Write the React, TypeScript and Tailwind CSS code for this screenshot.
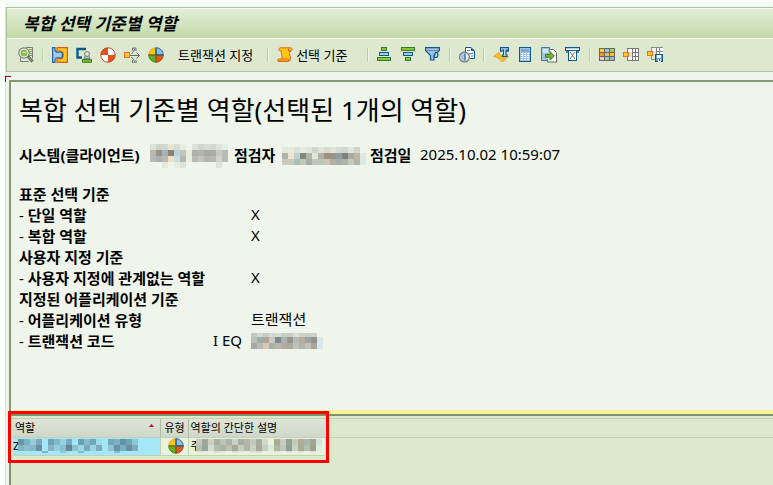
import type { ReactNode } from 'react'

const FONT = "font-['Noto_Sans','Noto_Sans_CJK_KR',sans-serif]"

/* ---------- Toolbar icons (16x16) ---------- */

function Icon({ children, crisp = true }: { children: ReactNode; crisp?: boolean }) {
  return (
    <svg
      className="w-4 h-4 block shrink-0"
      viewBox="0 0 16 16"
      fill="none"
      shapeRendering={crisp ? 'crispEdges' : 'auto'}
      aria-hidden="true"
    >
      {children}
    </svg>
  )
}

const SearchDocIcon = () => (
  <Icon crisp={false}>
    <path d="M8 .5h6.500v11M2.500 10.500v4h8" stroke="#7b7b7b" />
    <path d="M9 1h5v10h-4z" fill="#e4f4c8" />
    <path d="M11 2.500h3M11 4.500h3M11 6.500h3M11 8.500h3" stroke="#6fa82f" />
    <circle cx="6" cy="6" r="5.200" fill="#f4f8ee" stroke="#808080" strokeWidth="1.200" />
    <circle cx="6" cy="6" r="3.500" fill="#8cc152" />
    <path d="M4.500 5.500h4" stroke="#cfe8a8" />
    <path d="M10 9.500l4.500 5" stroke="#666" strokeWidth="3" />
    <path d="M10.500 10l3 3.500" stroke="#a8a8a8" />
  </Icon>
)

const RoleInIcon = () => (
  <Icon crisp={false}>
    <path d="M5 .600h10.400v14.800H5V12h2.500c5 0 5-8 0-8H5z" fill="#ffc61a" stroke="#e0581e" strokeWidth="1.200" />
    <path
      d="M.600.600h2.400v3c1.500 2 3 2 4.500 1.400 4-1 4 7 0 6-1.500-.6-3-.6-4.500 1.400v3H.600z"
      fill="#a4c8e6"
      stroke="#1c679b"
      strokeWidth="1.200"
    />
  </Icon>
)

const UserScreenIcon = () => (
  <Icon crisp={false}>
    <path d="M10 2H1.500v8.500H6" stroke="#0b5a8c" strokeWidth="2.400" />
    <path d="M6.500 15.300v-3h9v3z" fill="#7db72f" stroke="#2f7d1e" />
    <path d="M8.500 11.500V9.800h5v1.700z" fill="#eee" stroke="#777" />
    <circle cx="11" cy="7" r="2.400" fill="#e6e6e6" stroke="#777" />
  </Icon>
)

const SingleRoleIcon = () => (
  <Icon crisp={false}>
    <circle cx="8" cy="8" r="7.300" fill="#fff" />
    <path d="M8 8V.7A7.300 7.300 0 0 0 .7 8zM8 8v7.300A7.300 7.300 0 0 0 15.300 8z" fill="#d9541e" />
    <circle cx="8" cy="8" r="7.200" stroke="#c24a1c" />
  </Icon>
)

const DistributeIcon = () => (
  <Icon>
    <path d="M0 5h6v6H0z" fill="#e8702a" />
    <path d="M1 6h4v4H1z" fill="#ffc928" />
    <path d="M6 8h9v1H6z" fill="#6b6b6b" />
    <path d="M7.500 7L11 2M7.500 10L11 15M8.500 3.500V1H12v3M8.500 13v3H12v-3M12.500 5.500l3 3-3 3" stroke="#6b6b6b" shapeRendering="auto" />
  </Icon>
)

const CompositeRoleIcon = () => (
  <Icon crisp={false}>
    <path d="M8 8V.7A7.300 7.300 0 0 0 .7 8z" fill="#ffc414" stroke="#d99a00" strokeWidth=".7" />
    <path d="M8 8V.7A7.300 7.300 0 0 1 15.300 8z" fill="#8fbce0" stroke="#1c679b" strokeWidth=".9" />
    <path d="M8 8v7.300A7.300 7.300 0 0 1 .7 8z" fill="#69ad25" stroke="#2f8d1e" strokeWidth=".9" />
    <path d="M8 8v7.300A7.300 7.300 0 0 0 15.300 8z" fill="#dc5a1e" stroke="#b9451a" strokeWidth=".9" />
    <path d="M8 .5v7.500h7.500" stroke="#0b5a8c" />
    <path d="M8 15.500V8H.5" stroke="#8a5a14" />
  </Icon>
)

const ScrollIcon = () => (
  <Icon crisp={false}>
    <path
      d="M3.500.8h10c2 0 2.200 3 .3 3.200H13c-.8 2-.4 3.500.2 5.500.5 2 .2 3.500-1 4.800H1.500C.3 14.300.4 12 1.800 12h3c.6-1.500.3-3-.2-4.500C4.200 6 4.200 5 4.500 4H3.500C1.500 4 1.500.8 3.500.8z"
      fill="#ffc414"
      stroke="#d9641e"
    />
    <path d="M1 14.300h9.500c1.500 0 2-2.300.3-2.300H4.500M11.500 1.500v2.500H14" stroke="#d9641e" />
  </Icon>
)

const SortAscIcon = () => (
  <Icon>
    <path d="M4.500.500h5v3h-5z" fill="#8ac62f" stroke="#2f7d3c" />
    <path d="M2.500 5.500h9v3h-9z" fill="#a8cbe6" stroke="#0b5a8c" />
    <path d="M.5 10.500h13v3H.5z" fill="#8ac62f" stroke="#2f7d3c" />
  </Icon>
)

const SortDescIcon = () => (
  <Icon>
    <path d="M.5.500h13v3H.5z" fill="#8ac62f" stroke="#2f7d3c" />
    <path d="M2.500 5.500h9v3h-9z" fill="#a8cbe6" stroke="#0b5a8c" />
    <path d="M4.500 10.500h5v3h-5z" fill="#8ac62f" stroke="#2f7d3c" />
  </Icon>
)

const FilterIcon = () => (
  <Icon crisp={false}>
    <path d="M.6.600h13.800v3L9 8.500v4.500H5.500V8.500L.600 3.600z" fill="#9fc0e0" stroke="#0b5a8c" strokeWidth="1.200" />
    <path d="M1 3.500h13" stroke="#5f95bd" />
    <path d="M10.500 5.500c3-1 3.500 5 0 5-1.500 0-1.500-1-1-2z" fill="#b9d6ec" stroke="#0b5a8c" strokeWidth="1.200" />
  </Icon>
)

const ClockDocIcon = () => (
  <Icon crisp={false}>
    <path d="M6.500 5V.5H12L15.500 4v7.500H11" fill="#fff" stroke="#0b5a8c" />
    <path d="M12 .5V4h3.500z" fill="#0b5a8c" />
    <path d="M8 3.500h3M10 6.500h4M12 9h2" stroke="#4f8bb8" />
    <circle cx="5.500" cy="10" r="4.900" fill="#e6eef4" stroke="#707070" strokeWidth="1.200" />
    <path d="M5.500 5.700a4.300 4.300 0 0 0 0 8.600z" fill="#a8c6de" />
    <path d="M6 6.500v7" stroke="#0b5a8c" strokeWidth="1.200" />
  </Icon>
)

const TextWaveIcon = () => (
  <Icon crisp={false}>
    <path d="M.6 9.500L6 5.500c1 2.500 3 5.500 9.400 4L10 14.300c-3 .5-3.500-4.500-9.400-4.800z" fill="#ffc02a" stroke="#ee9a1a" />
    <path d="M7.500.600h8v3.500h-1.300V3H13v5h1v1.500h-4.500V8h1V3H9v1.200H7.500z" fill="#c5dcf0" stroke="#0b5a8c" strokeWidth="1.100" />
  </Icon>
)

const CalculatorIcon = () => (
  <Icon>
    <path d="M2.500.500h11v14h-11z" fill="#9fc4e4" stroke="#0b5a8c" />
    <path d="M4 2h8v2.500H4z" fill="#7aa7cf" />
    <path d="M4 6h2v1H4zM7 6h2v1H7zM10 6h2v1h-2zM4 8h2v1H4zM7 8h2v1H7zM10 8h2v1h-2zM4 10h2v1H4zM7 10h2v1H7zM10 10h2v1h-2zM4 12h2v1H4zM7 12h2v1H7zM10 12h2v1h-2z" fill="#fff" />
  </Icon>
)

const ExportIcon = () => (
  <Icon crisp={false}>
    <path d="M.5.500h8v13h-8z" fill="#9fc4e4" stroke="#3c7cab" />
    <path d="M2 3h5M2 5h5" stroke="#fff" />
    <path d="M9 2.500h3.500l3 3v9.500H6.500v-3" fill="#fff" stroke="#666" />
    <path d="M4.500 7.500H9v-3L13.300 9 9 13.200v-3H4.500z" fill="#7db72f" stroke="#2f7d1e" />
  </Icon>
)

const MailOutIcon = () => (
  <Icon>
    <path d="M.5.500h14v3H.5z" fill="#a8cbe6" stroke="#0b5a8c" />
    <path d="M1 2h13v1H1z" fill="#fff" />
    <path d="M1 4h2v2H1zM12 4h2v2h-2z" fill="#777" />
    <path d="M3.500 3.500h8v10h-8z" fill="#fff" stroke="#0b5a8c" />
    <path d="M5 5l5 7M10 5l-5 7" stroke="#777" shapeRendering="auto" />
  </Icon>
)

const LayoutIcon = () => (
  <Icon>
    <path d="M0 1h16v13H0z" fill="#666" />
    <path d="M1 2h4v3H1z" fill="#ffcf3a" />
    <path d="M6 2h4v3H6z" fill="#9dbfe4" />
    <path d="M11 2h4v3h-4z" fill="#a3cf54" />
    <path d="M1 6h4v3H1z" fill="#f99a00" />
    <path d="M6 6h4v3H6z" fill="#d9b8a4" />
    <path d="M11 6h4v3h-4z" fill="#ffc400" />
    <path d="M1 10h4v3H1z" fill="#f5c3cd" />
    <path d="M6 10h4v3H6z" fill="#a3cf94" />
    <path d="M11 10h4v3h-4z" fill="#8fb8dc" />
  </Icon>
)

const LayoutPickIcon = () => (
  <Icon>
    <path d="M4 1h12v13H4z" fill="#777" />
    <path d="M5 2h4v3H5zM10 2h5v3h-5zM10 6h5v3h-5zM5 10h4v3H5zM10 10h5v3h-5z" fill="#fff" />
    <path d="M12 2h1v11h-1z" fill="#777" />
    <path d="M3 5h6v5H3z" fill="#dde8cf" />
    <path d="M0 5h6v5H0z" fill="#e8702a" />
    <path d="M1 6h4v3H1z" fill="#ffc928" />
  </Icon>
)

const LayoutSaveIcon = () => (
  <Icon>
    <path d="M4 0h12v9H4z" fill="#888" />
    <path d="M5 1h4v3H5zM10 1h2v3h-2zM13 1h3v3h-3zM10 5h2v2h-2zM13 5h3v2h-3z" fill="#fff" />
    <path d="M3 4h6v5H3z" fill="#dde8cf" />
    <path d="M4 9h1v3h3v1H4z" fill="#888" />
    <path d="M0 4h6v5H0z" fill="#e8702a" />
    <path d="M1 5h4v3H1z" fill="#ffc928" />
    <path d="M8.500 7.500h7v7h-7z" fill="#5fa0d0" stroke="#0b5a8c" />
    <path d="M10 8h4v3h-4zM11 12h3v3h-3z" fill="#fff" />
    <path d="M12 12h1v2h-1z" fill="#0b5a8c" />
  </Icon>
)

function IconButton({ label, children }: { label: string; children: ReactNode }) {
  return (
    <button type="button" aria-label={label} className="shrink-0 hover:brightness-110">
      {children}
    </button>
  )
}

const Separator = () => (
  <span className="w-0.5 h-3.5 shrink-0 bg-[#b5d39b] border-r border-[#eaf4df]" />
)

/* ---------- Masked values ---------- */

interface MaskProps {
  rows: string[][]
  heights: number[]
}

// Each cell is 6px wide; an empty string leaves the cell transparent
function Mask({ rows, heights }: MaskProps) {
  const width = Math.max(...rows.map(r => r.length)) * 6
  const height = heights.reduce((a, b) => a + b, 0)
  return (
    <svg width={width} height={height} className="block shrink-0" shapeRendering="crispEdges" aria-hidden="true">
      {rows.map((row, r) => {
        const y = heights.slice(0, r).reduce((a, b) => a + b, 0)
        return row.map((c, i) =>
          c ? <rect key={`${r}-${i}`} x={i * 6} y={y} width={6} height={heights[r]} fill={`#${c}`} /> : null
        )
      })}
    </svg>
  )
}

// Masked table cell: the first letter shows from under the mask
function MaskedCell({ text, rows }: { text: string; rows: string[][] }) {
  return (
    <div className="relative h-4">
      {text}
      <div className="absolute left-[5px] top-px">
        <Mask rows={rows} heights={[6, 6, 2]} />
      </div>
    </div>
  )
}

const systemMask = [
  ['dbe3d6', 'cfd4cb', 'd4d8ce', 'e3e6d9', 'd7ddd2', 'e8ede2', '', 'dde1d7', 'd2d6cd', 'd8dcd2', 'd5d9d0', 'dfe3d8', 'e4efe4'],
  ['b5b9b4', '9c9185', 'a3b4b8', '8f8273', 'bdd3dc', 'c3c5b9', 'e8eedf', 'aeb0ac', 'b3b3ae', 'a9aaa6', 'abaca7', 'c8c9bf', 'b8beb6'],
  ['b8b9b4', 'a8b0ae', 'b6bab5', 'efe0c4', 'cbdfe2', 'b3b8b1', 'ecefe0', 'b8bab5', 'c2c3bd', 'b3b5b0', 'b6b8b2', 'd3d5cb', 'b5bdb5'],
  ['', '', 'e3eadd', '', 'e5eee1', 'dce5db', '', '', '', '', '', 'dde3d8', ''],
]

const checkerMask = [
  ['e5e9dc', 'e8eade', 'dde2d6', 'e6eade', 'e1e5d9', 'cfd5cc', 'dfe3d8', 'd8dcd1', 'e4e3d8', 'd3dbd2', 'd0d6cc', 'e2e5da', 'd1d4ca', ''],
  ['b3b2ab', 'f0e3cb', 'bccfd3', '84857d', 'b2b3a9', 'e3e8d4', 'aeb2ab', '9f8d80', '97938b', '8f9ea3', '7f8078', 'a6aba5', 'c1b5a2', 'dce9e6'],
  ['cbcbbd', 'c9cab9', 'a9bfbd', 'c1c8b8', 'a9aca0', 'bfc6b9', 'bdc4ba', 'cdc3b4', 'b3b1a2', 'a4aeaa', 'adb4a7', 'c5c8ba', 'b3b3a8', 'dce9e6'],
]

const codeMask = [
  ['c6c9bf', 'd3d9cf', 'cbcec4', 'cfd8d2', 'd6dbd1', 'c5cdc5', 'cbcbc1', 'dadfd5', 'd0d1c8', 'c9cec5', 'ccd0c6', ''],
  ['bebeb4', '9bafb3', 'b5a597', 'c8ccc0', '7d8890', 'a9b4b3', '96968e', 'b3bab1', 'bcab9c', '9aa6a6', '94958e', 'd9e8e8'],
  ['a8aaa2', 'b9bab0', 'd6cab6', 'a9b2aa', 'b5b7ad', 'b8a99b', 'a9aaa2', 'bfc4ba', 'b1b4aa', 'c5c1b3', 'a6a8a0', 'd9e8e8'],
]

const roleMask = [
  ['6d97a8', '79b3c4', '9acbd9', '7fa6ba', 'a3e6f5', '6ba4b9', '82b9c9', '9acfe0', '76acbf', 'a3e6f5', '6c9fb3', '86bbcc', '6fa8ba', '9fdbea', 'a3e6f5', '6ea8b9', '84aebd', '5f94a8', '72a3b5', '8ac8d9', 'a3e6f5'],
  ['7fb4c5', '8dbccb', '83b9cb', '6a8ea8', 'a3e6f5', '8ab1c1', '93cfe1', '84c0d0', '65849a', '8fc0cf', '99d8e8', '7baabd', '9bd5e5', '7ca9bb', 'a3e6f5', '8ec3d3', '6893a8', '79b0c1', '678da2', '7faabb', 'a3e6f5'],
  ['', '', '', '', '7fb5c4', '', '', '8cc6d5', '', '', '8ab9c7', '', '', '', '', '', '8abdcb', '', '', '', ''],
]

const descMask = [
  ['c4cabb', '9fa89f', 'cbd2c2', 'a8aea0', 'bcc6b8', 'a7b4ab', 'cbd1bf', 'a6aea4', 'b8b5a5', 'c2cbbc', 'a5aea3', 'd2d9c9', '', 'aba99a', 'c6cebf', '93a39c', 'c2cabb', 'b1aa97', 'a9b8ac', 'a5a591', 'cfe5e0'],
  ['b8c0b0', '99a59d', 'd4dccd', 'b3bdaf', 'a6b5aa', 'bac0ae', 'a7a896', 'c5cebd', 'aeb5a7', 'ccd2c1', 'a8aa9d', 'c5cec0', 'd8ecdc', 'b3b3a2', 'bcc8bb', '8f9f98', 'c9d1c1', 'a9ab9b', 'b0c1b3', 'a1a18e', 'dcefdf'],
  ['dfe7d3', 'e4ecd9', '', 'd9e2cf', 'e0e9d5', '', 'dae2ce', 'e2ebd8', '', 'dde5d2', 'd9e0cd', '', '', 'e0e8d5', '', 'd9e3d1', '', 'dfe7d4', '', 'dfe7d3', ''],
]

/* ---------- Report header data ---------- */

interface Criterion {
  label: string
  dashed?: boolean
  option?: string
  value?: ReactNode
}

const criteria: Criterion[] = [
  { label: '표준 선택 기준' },
  { label: '단일 역할', dashed: true, value: 'X' },
  { label: '복합 역할', dashed: true, value: 'X' },
  { label: '사용자 지정 기준' },
  { label: '사용자 지정에 관계없는 역할', dashed: true, value: 'X' },
  { label: '지정된 어플리케이션 기준' },
  { label: '어플리케이션 유형', dashed: true, value: '트랜잭션' },
  { label: '트랜잭션 코드', dashed: true, option: 'I EQ', value: <Mask rows={codeMask} heights={[4, 6, 6]} /> },
]

export default function App() {
  return (
    <div className={`min-h-screen flex flex-col bg-[#fdfffb] pl-[5px] text-black ${FONT}`}>
      <div className="h-[7px] bg-linear-to-b from-[#f8fdf8] to-[#f0f8ee]" />

      <div className="flex-1 flex flex-col border-l border-[#d6e6ce] bg-[#eff5ea]">
        {/* Title bar and toolbar */}
        <header className="border-y border-l border-[#afc3a0]">
          <div className="h-[31px] flex items-center pl-4 border-y border-[#f5faef] bg-linear-to-b from-[#e1edd6] to-[#c3daa9]">
            <h1 className="text-[17px] leading-6 font-bold italic whitespace-nowrap">복합 선택 기준별 역할</h1>
          </div>
          <div role="toolbar" className="h-8 flex items-center gap-2 pl-[11px] pb-px bg-[#dde8cf] text-[13px]">
            <IconButton label="상세"><SearchDocIcon /></IconButton>
            <Separator />
            <IconButton label="역할"><RoleInIcon /></IconButton>
            <IconButton label="사용자"><UserScreenIcon /></IconButton>
            <IconButton label="단일 역할"><SingleRoleIcon /></IconButton>
            <IconButton label="분배"><DistributeIcon /></IconButton>
            <IconButton label="복합 역할"><CompositeRoleIcon /></IconButton>
            <button type="button" className="px-1.5 leading-5 whitespace-nowrap">트랜잭션 지정</button>
            <Separator />
            <button type="button" className="flex items-center gap-[3px] pr-3 leading-5 whitespace-nowrap">
              <ScrollIcon />
              선택 기준
            </button>
            <Separator />
            <IconButton label="오름차순 정렬"><SortAscIcon /></IconButton>
            <IconButton label="내림차순 정렬"><SortDescIcon /></IconButton>
            <IconButton label="필터"><FilterIcon /></IconButton>
            <Separator />
            <IconButton label="인쇄 미리보기"><ClockDocIcon /></IconButton>
            <Separator />
            <IconButton label="워드"><TextWaveIcon /></IconButton>
            <IconButton label="스프레드시트"><CalculatorIcon /></IconButton>
            <IconButton label="로컬 파일"><ExportIcon /></IconButton>
            <IconButton label="메일"><MailOutIcon /></IconButton>
            <Separator />
            <IconButton label="레이아웃 변경"><LayoutIcon /></IconButton>
            <IconButton label="레이아웃 선택"><LayoutPickIcon /></IconButton>
            <IconButton label="레이아웃 저장"><LayoutSaveIcon /></IconButton>
          </div>
        </header>

        <main className="relative flex-1 flex flex-col pt-2 pl-[3px]">
          {/* Focus corner */}
          <span className="absolute -left-px top-1 w-1.5 h-1.5 border-t border-l border-[#8c0010]" />

          {/* Report header */}
          <section className="border-t-2 border-l-2 border-[#869973] pl-2 pt-3 pb-[58px]">
            <h2 className="text-[26px] leading-8 whitespace-nowrap">복합 선택 기준별 역할(선택된 1개의 역할)</h2>

            <div className="flex items-center h-[21px] mt-[19px] text-[15px] whitespace-nowrap">
              <b className="w-[131px]">시스템(클라이언트)</b>
              <Mask rows={systemMask} heights={[6, 6, 6, 6]} />
              <b className="ml-1.5 w-12">점검자</b>
              <Mask rows={checkerMask} heights={[6, 6, 6]} />
              <b className="ml-1 w-[50px]">점검일</b>
              <span className="pb-0.5">2025.10.02 10:59:07</span>
            </div>

            <dl className="mt-[18px] text-[15px] leading-[21px] whitespace-nowrap">
              {criteria.map(c => (
                <div key={c.label} className="flex items-center h-[21px]">
                  <dt className="w-[194px] font-bold">
                    {c.dashed && <span className="font-normal">- </span>}
                    {c.label}
                  </dt>
                  <dd className="w-[38px] pb-0.5">{c.option}</dd>
                  <dd className="pb-0.5">{c.value}</dd>
                </div>
              ))}
            </dl>
          </section>

          {/* Splitter */}
          <div className="h-1 border-l-2 border-[#869973] bg-[#fff09c]" />

          {/* Result list */}
          <section className="relative flex-1 border-t-2 border-l-2 border-[#7d916b] bg-[#dce9ca] pt-0.5">
            <div className="border-t border-[#c3d0b8] pl-0.5">
              <table className="w-full table-fixed border-collapse text-[11px] leading-4 text-left whitespace-nowrap">
                <colgroup>
                  <col className="w-[147px]" />
                  <col className="w-7" />
                  <col className="w-[137px]" />
                  <col />
                </colgroup>
                <thead>
                  <tr className="h-[18px] border-b border-[#c3cfb8]">
                    <th className="p-0 pl-0.5 font-normal bg-linear-to-b from-[#dfe5d7] to-[#cfd7c8] border-r border-[#aebba4]">
                      <span className="flex justify-between pr-1.5">
                        역할
                        <svg width="5" height="3" className="mt-1" aria-hidden="true">
                          <path d="M2.500 0L5 3H0z" fill="#c00020" />
                        </svg>
                      </span>
                    </th>
                    <th className="p-0 pl-1 font-normal bg-linear-to-b from-[#dfe5d7] to-[#cfd7c8] border-r border-[#aebba4]">유형</th>
                    <th className="p-0 pl-0.5 font-normal bg-linear-to-b from-[#dfe5d7] to-[#cfd7c8]">역할의 간단한 설명</th>
                    <th className="p-0" aria-hidden="true" />
                  </tr>
                </thead>
                <tbody>
                  <tr className="h-[18px]">
                    <td className="p-0 bg-[#a4e7f6] border-r border-b border-[#c3cfb8]">
                      <MaskedCell text="Z" rows={roleMask} />
                    </td>
                    <td className="p-0 pl-[7px] bg-[#e9f3dc] border-r border-b border-[#c3cfb8]"><CompositeRoleIcon /></td>
                    <td className="p-0 pl-0.5 bg-[#e9f3dc] border-b border-[#c3cfb8]">
                      <MaskedCell text="주" rows={descMask} />
                    </td>
                    <td className="p-0" />
                  </tr>
                </tbody>
              </table>
            </div>

            {/* Highlight box */}
            <div className="absolute -left-[3px] -top-[5px] w-[321px] h-[52px] border-3 border-[#ff0000] pointer-events-none" />
          </section>
        </main>
      </div>
    </div>
  )
}
